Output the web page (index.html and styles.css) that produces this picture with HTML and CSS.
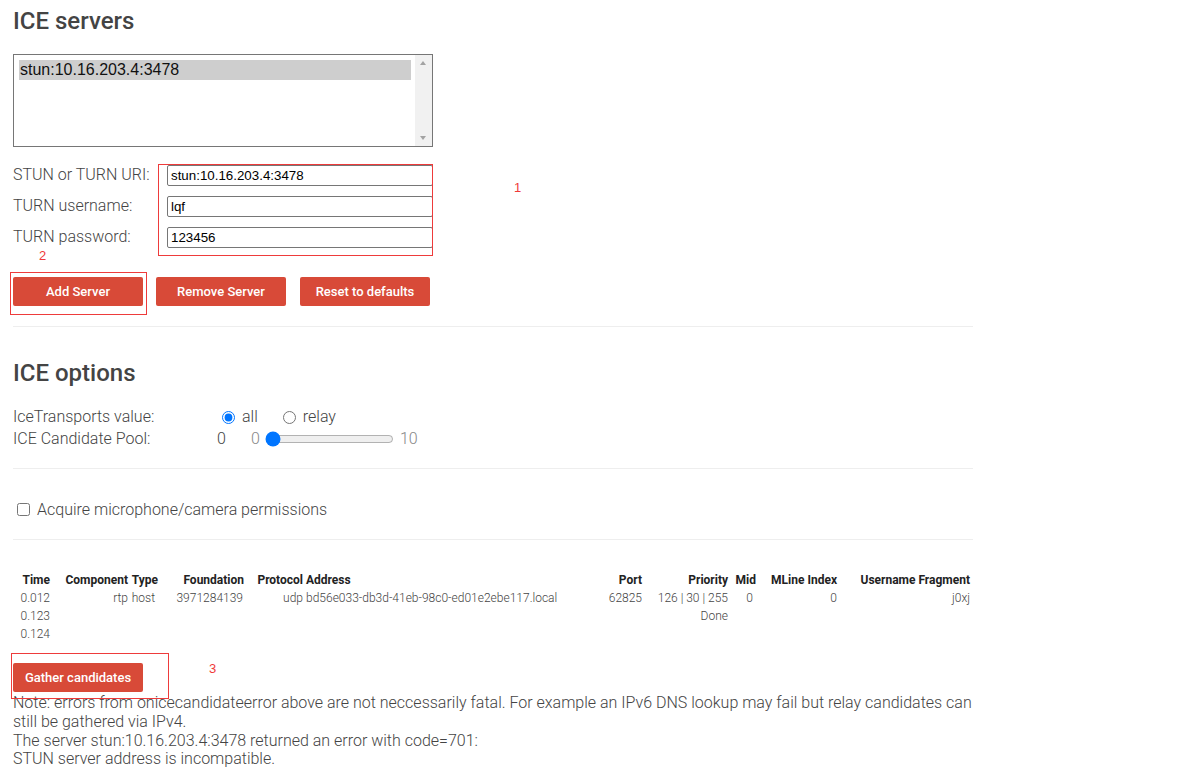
FILE: index.html
```html
<!DOCTYPE html>
<html lang="en">
<head>
<meta charset="utf-8">
<title>Trickle ICE</title>
<link rel="stylesheet" href="styles.css">
</head>
<body>
<div class="page">
  <section class="servers-section">
    <h2 class="title first">ICE servers</h2>
    <div class="server-select">
      <div class="server-list">
        <div class="option selected">stun:10.16.203.4:3478</div>
      </div>
      <div class="scrollbar">
        <span class="arrow up"></span>
        <span class="arrow down"></span>
      </div>
    </div>
    <div class="server-form">
      <label class="form-label" for="url">STUN or TURN URI:</label>
      <input class="form-input" id="url" type="text" value="stun:10.16.203.4:3478">
      <label class="form-label" for="username">TURN username:</label>
      <input class="form-input" id="username" type="text" value="lqf">
      <label class="form-label" for="password">TURN password:</label>
      <input class="form-input" id="password" type="text" value="123456">
    </div>
    <div class="button-row">
      <button class="btn">Add Server</button>
      <button class="btn">Remove Server</button>
      <button class="btn">Reset to defaults</button>
    </div>
  </section>

  <hr class="rule rule-1">

  <section class="options-section">
    <h2 class="title second">ICE options</h2>
    <div class="opt-row first-row">
      <span class="opt-label">IceTransports value:</span>
      <label class="radio radio-all"><input type="radio" name="transports" checked><span>all</span></label>
      <label class="radio"><input type="radio" name="transports"><span>relay</span></label>
    </div>
    <div class="opt-row">
      <span class="opt-label">ICE Candidate Pool:</span>
      <span class="pool-value">0</span>
      <span class="range-min">0</span>
      <input class="pool-range" type="range" min="0" max="10" value="0">
      <span class="range-max">10</span>
    </div>
  </section>

  <hr class="rule rule-2">

  <div class="perm-row">
    <label class="perm"><input type="checkbox"><span>Acquire microphone/camera permissions</span></label>
  </div>

  <hr class="rule rule-3">

  <table class="candidates">
    <colgroup>
      <col class="c-time"><col class="c-comp"><col class="c-type"><col class="c-found"><col class="c-proto"><col class="c-addr"><col class="c-port"><col class="c-prio"><col class="c-mid"><col class="c-mline"><col class="c-ufrag">
    </colgroup>
    <thead>
      <tr><th>Time</th><th>Component</th><th>Type</th><th>Foundation</th><th>Protocol</th><th class="left">Address</th><th>Port</th><th>Priority</th><th>Mid</th><th>MLine Index</th><th>Username Fragment</th></tr>
    </thead>
    <tbody>
      <tr><td>0.012</td><td>rtp</td><td class="shift">host</td><td class="shift1">3971284139</td><td>udp</td><td class="left">bd56e033-db3d-41eb-98c0-ed01e2ebe117.local</td><td>62825</td><td>126 | 30 | 255</td><td class="shift">0</td><td>0</td><td>j0xj</td></tr>
      <tr><td>0.123</td><td></td><td></td><td></td><td></td><td class="left"></td><td></td><td>Done</td><td></td><td></td><td></td></tr>
      <tr><td>0.124</td><td></td><td></td><td></td><td></td><td class="left"></td><td></td><td></td><td></td><td></td><td></td></tr>
    </tbody>
  </table>

  <div class="gather-row">
    <button class="btn">Gather candidates</button>
  </div>

  <div class="note">
    <p>Note: errors from onicecandidateerror above are not neccessarily fatal. For example an IPv6 DNS lookup may fail but relay candidates can still be gathered via IPv4.</p>
    <p>The server stun:10.16.203.4:3478 returned an error with code=701:</p>
    <p>STUN server address is incompatible.</p>
  </div>

  <div class="annot box box-1"></div>
  <div class="annot num num-1">1</div>
  <div class="annot num num-2">2</div>
  <div class="annot box box-2"></div>
  <div class="annot box box-3"></div>
  <div class="annot num num-3">3</div>
</div>
</body>
</html>
```

FILE: styles.css
```css
html, body {
  margin: 0;
  padding: 0;
  background: #ffffff;
}

body {
  font-family: Roboto, "Noto Sans", sans-serif;
  font-weight: 300;
  font-size: 16px;
  color: #444444;
}

.page {
  position: relative;
  width: 960px;
  padding-left: 13px;
}

.title {
  margin: 0;
  font-size: 24px;
  line-height: 28px;
  font-weight: 500;
  color: #444444;
}

.title.first {
  padding-top: 7px;
}

.title.second {
  margin-top: 32px;
}

/* Server list (select box look) */
.server-select {
  margin-top: 19px;
  width: 420px;
  height: 93px;
  box-sizing: border-box;
  border: 1px solid #767676;
  display: flex;
  background: #fff;
}

.server-list {
  flex: 1;
  padding: 5px 4px 0 5px;
}

.option {
  font-family: "Liberation Sans", Arial, sans-serif;
  font-weight: 400;
  font-size: 16px;
  line-height: 20px;
  height: 20px;
  color: #111;
  padding-left: 1px;
}

.option.selected {
  background: #cecece;
}

.scrollbar {
  width: 17px;
  background: #f1f1f1;
  position: relative;
}

.arrow {
  position: absolute;
  left: 5px;
  width: 0;
  height: 0;
  border-left: 3.5px solid transparent;
  border-right: 3.5px solid transparent;
}

.arrow.up {
  top: 6px;
  border-bottom: 4px solid #a3a3a3;
}

.arrow.down {
  bottom: 6px;
  border-top: 4px solid #a3a3a3;
}

/* Form */
.server-form {
  margin-top: 17px;
  display: grid;
  grid-template-columns: 154px 266px;
  grid-auto-rows: 31px;
  align-items: start;
}

.form-label {
  line-height: 21px;
  white-space: nowrap;
}

.form-input {
  margin: 1px 0 0 0;
  box-sizing: border-box;
  width: 266px;
  height: 21px;
  border: 1px solid #767676;
  border-radius: 2px;
  padding: 1px 3px;
  font-family: "Liberation Sans", Arial, sans-serif;
  font-size: 13.33px;
  color: #000;
  background: #fff;
}

.button-row {
  margin-top: 20px;
  display: flex;
  gap: 13px;
}

.button-row .btn:nth-child(3) {
  margin-left: 1px;
}

.btn {
  width: 130px;
  height: 29px;
  padding: 0;
  border: none;
  border-radius: 2px;
  background-color: #d84a38;
  color: #ffffff;
  font-family: Roboto, sans-serif;
  font-weight: 500;
  font-size: 13px;
  cursor: pointer;
}

.rule {
  margin: 0;
  border: none;
  border-top: 1px solid #eeeeee;
  height: 0;
  width: 960px;
}

.rule-1 { margin-top: 20px; }
.rule-2 { margin-top: 18px; }
.rule-3 { margin-top: 19px; }

/* Options */
.opt-row {
  display: flex;
  align-items: center;
  height: 22px;
  line-height: 22px;
}

.opt-row.first-row {
  margin-top: 19px;
}

.opt-label {
  width: 204px;
  flex: none;
}

.radio {
  display: inline-flex;
  align-items: center;
}

.radio input {
  margin: 0 7px 0 5px;
  width: 13px;
  height: 13px;
}

.radio-all {
  margin-right: 20px;
}

.pool-value {
  width: 34px;
  flex: none;
}

.range-min {
  color: #888888;
}

.range-max {
  color: #888888;
  margin-left: 4px;
}

.pool-range {
  width: 129px;
  margin: 0 2px 0 5px;
}

/* permissions */
.perm-row {
  margin-top: 29px;
  height: 22px;
  display: flex;
  align-items: center;
}

.perm {
  display: inline-flex;
  align-items: center;
}

.perm input {
  margin: 0 7px 0 4px;
  width: 13px;
  height: 13px;
}

/* Table */
.candidates {
  margin-top: 31px;
  border-collapse: collapse;
  table-layout: fixed;
  width: 957px;
  font-size: 12px;
}

.candidates th,
.candidates td {
  padding: 0;
  height: 18px;
  line-height: 18px;
  text-align: right;
  white-space: nowrap;
  overflow: visible;
}

.candidates th {
  font-weight: 700;
  color: #222222;
}

.candidates td {
  font-weight: 300;
  color: #444444;
}

.candidates .left {
  text-align: left;
  padding-left: 3px;
}

.candidates td.shift {
  padding-right: 3px;
}

.candidates td.shift1 {
  padding-right: 1px;
}

.c-time { width: 37px; }
.c-comp { width: 78px; }
.c-type { width: 30px; }
.c-found { width: 86px; }
.c-proto { width: 59px; }
.c-addr { width: 297px; }
.c-port { width: 42px; }
.c-prio { width: 86px; }
.c-mid { width: 28px; }
.c-mline { width: 81px; }
.c-ufrag { width: 133px; }

.gather-row {
  margin-top: 20px;
  display: flex;
}

.note {
  padding-top: 2px;
}

.note p {
  margin: 0;
  line-height: 18.75px;
}

/* Annotations drawn over the screenshot */
.annot {
  position: absolute;
}

.box {
  box-sizing: border-box;
  border: 1px solid #ee3b3b;
}

.box-1 { left: 158px; top: 164px; width: 275px; height: 92px; }
.box-2 { left: 10px; top: 272px; width: 137px; height: 43px; }
.box-3 { left: 11px; top: 653px; width: 158px; height: 46px; }

.num {
  font-family: "Liberation Sans", Arial, sans-serif;
  font-weight: 400;
  font-size: 13px;
  line-height: 16px;
  color: #f03a3a;
}

.num-1 { left: 514px; top: 180px; }
.num-2 { left: 39px; top: 248px; }
.num-3 { left: 209px; top: 661px; }
```
